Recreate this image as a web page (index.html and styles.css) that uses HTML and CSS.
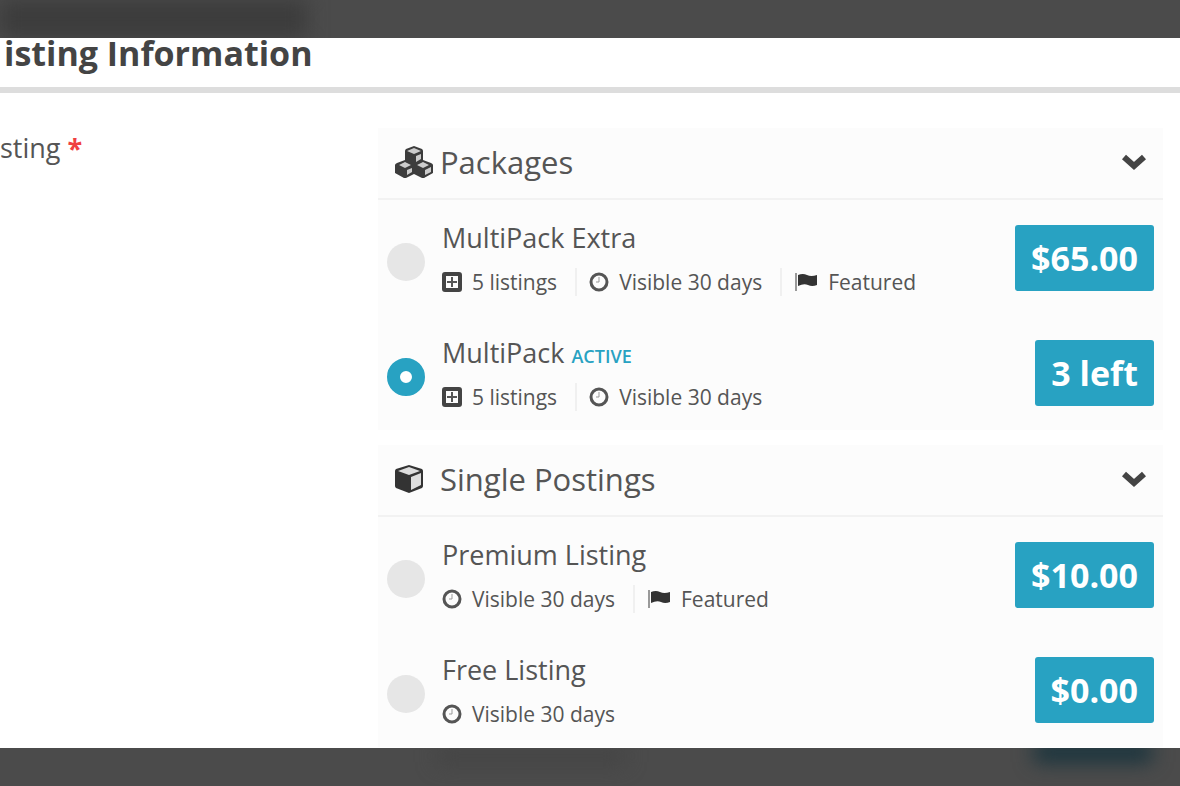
FILE: index.html
```html
<!DOCTYPE html>
<html lang="en">
<head>
    <meta charset="UTF-8">
    <meta name="viewport" content="width=device-width, initial-scale=1.0">
    <title>Listing Information</title>
    <link rel="stylesheet" href="styles.css">
</head>
<body>
    <!-- Shared icons -->
    <svg class="sprite" aria-hidden="true">
        <symbol id="cube" viewBox="0 0 30 30">
            <path d="M15 1 L28 5 Q29 6 29 7 V22 Q29 23 28 24 L15 29 L2 24 Q1 23 1 22 V7 Q1 6 2 5 Z" fill="#333"/>
            <path d="M15 3 L26 7 L15 11 L4 7 Z" fill="#ddd"/>
            <path d="M17 13 L27 9 V21 L17 26 Z" fill="#ddd"/>
        </symbol>
        <symbol id="cubes" viewBox="0 0 40 34">
            <path d="M20 1 L28 4 Q29 5 29 6 V15 L37 18 Q39 19 39 20 V28 L30 33 H28 L20 29 L12 33 H10 L1 28 V20 Q1 19 3 18 L11 15 V6 Q11 5 12 4 Z" fill="#3c3c3c"/>
            <path d="M20 3 L27 6 L20 9 L13 6 Z M22 11 L27 9 V14 L22 17 Z" fill="#ccc"/>
            <path d="M11 17 L17 20 L11 23 L5 20 Z M13 25 L18 23 V27 L13 30 Z" fill="#ccc"/>
            <path d="M29 17 L35 20 L29 23 L23 20 Z M31 25 L37 22 V27 L31 30 Z" fill="#ccc"/>
        </symbol>
        <symbol id="chevron" viewBox="0 0 26 18">
            <path d="M3 4 L13 13 L23 4" fill="none" stroke="#444" stroke-width="6"/>
        </symbol>
        <symbol id="plus" viewBox="0 0 20 20">
            <rect x="2" y="2" width="16" height="16" rx="1" fill="none" stroke="#444" stroke-width="4"/>
            <path d="M10 5 V15 M5 10 H15" stroke="#555" stroke-width="2"/>
        </symbol>
        <symbol id="clock" viewBox="0 0 20 20">
            <circle cx="10" cy="10" r="8" fill="none" stroke="#555" stroke-width="3"/>
            <path d="M10 5 V10 H7" fill="none" stroke="#999" stroke-width="1"/>
        </symbol>
        <symbol id="flag" viewBox="0 0 24 20">
            <path d="M2 1 V19" stroke="#999" stroke-width="2"/>
            <path d="M4 3 Q9 1 13 3 T23 3 V13 Q18 15 14 13 T4 14 Z" fill="#333"/>
        </symbol>
    </svg>

    <div class="bar bar-top"></div>

    <main>
        <h1>isting Information</h1>

        <div class="field">
            <div class="field-label">sting <span class="required">*</span></div>

            <div class="groups">
                <!-- Packages -->
                <section class="group">
                    <button type="button" class="group-head">
                        <svg class="icon-cubes"><use href="#cubes"/></svg>
                        <span class="group-name">Packages</span>
                        <svg class="icon-chevron"><use href="#chevron"/></svg>
                    </button>
                    <div class="rows">
                        <div class="row">
                            <input type="radio" name="package" id="extra">
                            <label for="extra">
                                <span class="name">MultiPack Extra</span>
                                <span class="meta">
                                    <span class="item"><svg><use href="#plus"/></svg>5 listings</span>
                                    <span class="item"><svg><use href="#clock"/></svg>Visible 30 days</span>
                                    <span class="item"><svg class="icon-flag"><use href="#flag"/></svg>Featured</span>
                                </span>
                            </label>
                            <span class="price">$65.00</span>
                        </div>
                        <div class="row">
                            <input type="radio" name="package" id="multi" checked>
                            <label for="multi">
                                <span class="name">MultiPack <span class="active">ACTIVE</span></span>
                                <span class="meta">
                                    <span class="item"><svg><use href="#plus"/></svg>5 listings</span>
                                    <span class="item"><svg><use href="#clock"/></svg>Visible 30 days</span>
                                </span>
                            </label>
                            <span class="price">3 left</span>
                        </div>
                    </div>
                </section>

                <!-- Single Postings -->
                <section class="group">
                    <button type="button" class="group-head">
                        <svg class="icon-cube"><use href="#cube"/></svg>
                        <span class="group-name">Single Postings</span>
                        <svg class="icon-chevron"><use href="#chevron"/></svg>
                    </button>
                    <div class="rows">
                        <div class="row">
                            <input type="radio" name="package" id="premium">
                            <label for="premium">
                                <span class="name">Premium Listing</span>
                                <span class="meta">
                                    <span class="item"><svg><use href="#clock"/></svg>Visible 30 days</span>
                                    <span class="item"><svg class="icon-flag"><use href="#flag"/></svg>Featured</span>
                                </span>
                            </label>
                            <span class="price">$10.00</span>
                        </div>
                        <div class="row">
                            <input type="radio" name="package" id="free">
                            <label for="free">
                                <span class="name">Free Listing</span>
                                <span class="meta">
                                    <span class="item"><svg><use href="#clock"/></svg>Visible 30 days</span>
                                </span>
                            </label>
                            <span class="price">$0.00</span>
                        </div>
                    </div>
                </section>
            </div>
        </div>
    </main>

    <div class="bar bar-bottom"></div>
</body>
</html>
```
FILE: styles.css
```css
* {
    box-sizing: border-box;
}

body {
    margin: 0;
    min-height: 100vh;
    display: flex;
    flex-direction: column;
    font-family: "Open Sans", Arial, sans-serif;
    background-color: #fff;
    color: #555;
}

.sprite {
    position: absolute;
    width: 0;
    height: 0;
}

.bar {
    display: flex;
    height: 38px;
    overflow: hidden;
    background-color: #4b4b4b;
}

.bar::before,
.bar::after {
    content: "";
    filter: blur(10px);
}

.bar-top::before {
    width: 26%;
    background-color: #3c3c3c;
}

.bar-bottom::before {
    width: 16%;
    height: 16px;
    margin-left: 37%;
    background-color: #444;
}

.bar-bottom::after {
    width: 10%;
    height: 20px;
    margin: -6px 28px 0 auto;
    background-color: #15323c;
}

main {
    flex: 1;
}

h1 {
    margin: 0;
    height: 55px;
    padding-left: 4px;
    border-bottom: 6px solid #ddd;
    font-size: 34px;
    line-height: 30px;
    color: #444;
}

.field {
    display: grid;
    grid-template-columns: 32.5% 1fr;
    padding: 35px 17px 0 0;
}

.field-label {
    font-size: 27px;
    line-height: 40px;
}

.required {
    color: #f04040;
    font-weight: bold;
}

.groups {
    display: flex;
    flex-direction: column;
    gap: 15px;
}

.group {
    background-color: #fcfcfc;
}

.group-head {
    display: flex;
    align-items: center;
    width: 100%;
    height: 72px;
    padding: 0 16px 2px;
    border: none;
    border-bottom: 2px solid #f2f2f2;
    background: none;
    font: inherit;
    font-size: 31px;
    color: #555;
}

.group-name {
    flex: 1;
    text-align: left;
}

.icon-cubes {
    width: 40px;
    height: 34px;
    margin-right: 6px;
}

.icon-cube {
    width: 30px;
    height: 30px;
    margin-right: 16px;
}

.icon-chevron {
    width: 26px;
    height: 18px;
}

.row {
    display: flex;
    align-items: center;
    height: 115px;
    padding: 0 9px;
}

.row input {
    appearance: none;
    flex: none;
    width: 38px;
    height: 38px;
    margin: 8px 17px 0 0;
    border-radius: 50%;
    background-color: #e6e6e6;
}

.row input:checked {
    border: 13px solid #28a2c2;
    background-color: #fff;
}

.row label {
    display: flex;
    flex: 1;
    flex-direction: column;
    gap: 12px;
}

.name {
    font-size: 27px;
    line-height: 36px;
}

.active {
    font-size: 18px;
    font-weight: 600;
    line-height: 18px;
    color: #28a2c2;
}

.meta {
    display: flex;
    font-size: 21px;
    line-height: 28px;
}

.item {
    display: flex;
    align-items: center;
    gap: 10px;
}

.item + .item {
    margin-left: 18px;
    padding-left: 12px;
    border-left: 2px solid #f0f0f0;
}

.item svg {
    width: 20px;
    height: 20px;
}

.item .icon-flag {
    width: 24px;
}

.price {
    padding: 0 16px;
    border-radius: 3px;
    background-color: #28a2c2;
    font-size: 34px;
    font-weight: bold;
    line-height: 66px;
    color: #fff;
}
```
